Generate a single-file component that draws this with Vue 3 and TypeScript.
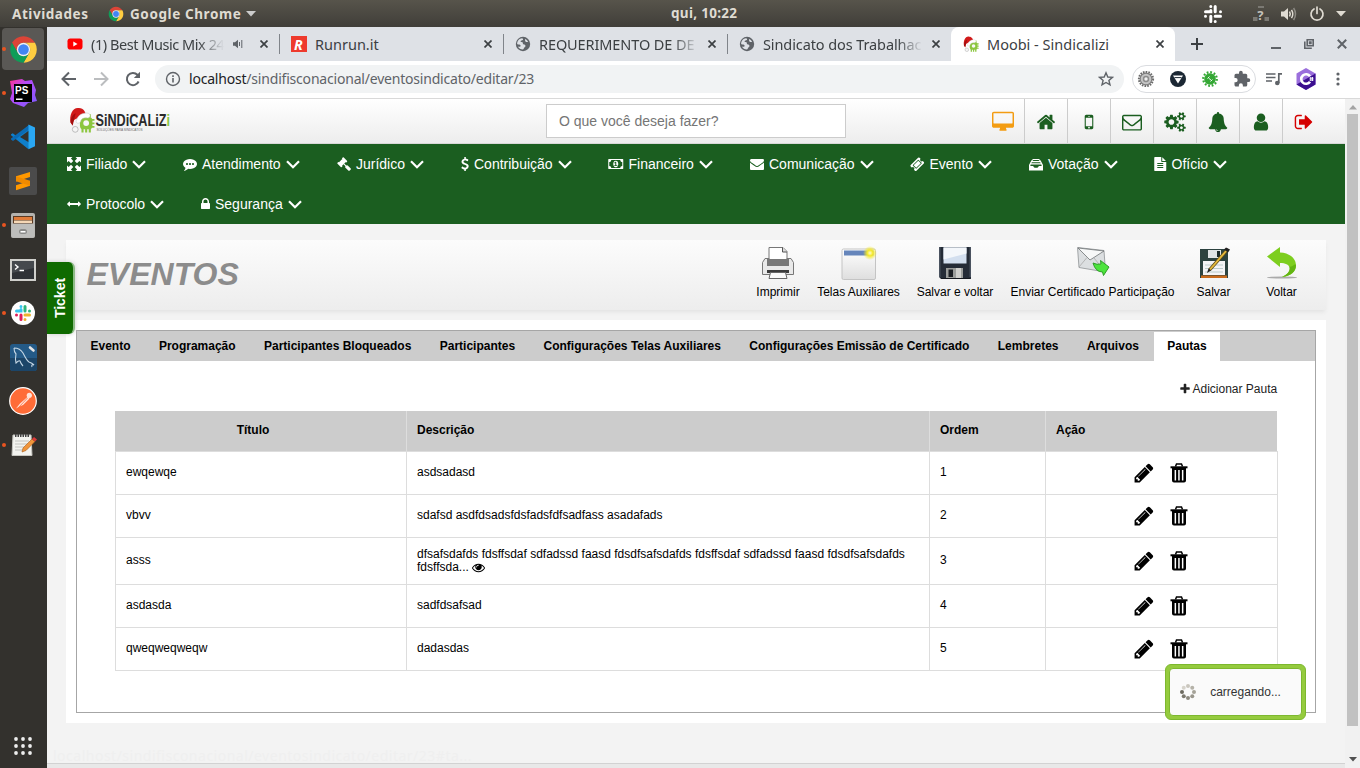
<script setup lang="ts">
interface NavItem { label: string; icon: string; box: string; iw: number; ih: number; width: number }
interface Row { titulo: string; descricao: string; ordem: number; more?: boolean }

const nav: NavItem[] = [
  { label: 'Filiado', icon: 'M0 0h5.500L3.900 1.600 6.300 4 4 6.300 1.600 3.900 0 5.500zM14 0v5.500l-1.600-1.600L10 6.300 7.700 4l2.400-2.400L8.500 0zM0 14V8.500l1.600 1.600L4 7.700 6.300 10l-2.400 2.400L5.500 14zM14 14H8.500l1.600-1.600L7.700 10 10 7.700l2.400 2.400L14 8.500z', box: '0 0 14 14', iw: 14, ih: 14, width: 116 },
  { label: 'Atendimento', icon: 'M640 896q0-53-37.500-90.500t-90.500-37.500-90.500 37.500-37.500 90.500 37.500 90.500 90.500 37.500 90.500-37.500 37.500-90.500zm384 0q0-53-37.500-90.500t-90.500-37.500-90.500 37.500-37.500 90.500 37.500 90.500 90.500 37.500 90.500-37.500 37.500-90.500zm384 0q0-53-37.500-90.500t-90.500-37.500-90.500 37.500-37.500 90.500 37.500 90.500 90.500 37.500 90.500-37.500 37.500-90.500zm384 0q0 174-120 321.500t-326 233-450 85.500q-110 0-211-18-173 173-435 229-52 10-86 13-12 1-22-6t-13-18q-4-15 20-37 5-5 23.500-21.500t25.500-23.500 23.500-25.500 24-31.500 20.500-37 20-48 14.500-57.500 12.500-72.500q-146-90-229.500-216.500t-83.500-269.500q0-174 120-321.500t326-233 450-85.500 450 85.500 326 233 120 321.500z', box: '0 0 1792 1792', iw: 14, ih: 14, width: 154 },
  { label: 'Jurídico', icon: 'M1771 1536q0 53-37 90l-107 108q-39 37-91 37-53 0-90-37l-363-364q-38-36-38-90 0-53 43-96l-256-256-126 126q-14 14-34 14t-34-14q2 2 12.500 12t12.500 13 10 11.500 10 13.500 6 13.500 5.500 16.500 1.500 18q0 38-28 68-3 3-16.500 18t-19 20.500-18.500 16.500-22 15.500-22 9-26 4.500q-40 0-68-28l-408-408q-28-28-28-68 0-13 4.500-26t9-22 15.500-22 16.500-18.500 20.500-19 18-16.500q30-28 68-28 10 0 18 1.500t16.500 5.500 13.500 6 13.500 10 11.500 10 13 12.500 12 12.500q-14-14-14-34t14-34l348-348q14-14 34-14t34 14q-2-2-12.500-12t-12.500-13-10-11.500-10-13.500-6-13.500-5.500-16.500-1.500-18q0-38 28-68 3-3 16.500-18t19-20.500 18.500-16.500 22-15.500 22-9 26-4.500q40 0 68 28l408 408q28 28 28 68 0 13-4.500 26t-9 22-15.500 22-16.500 18.500-20.500 19-18 16.500q-30 28-68 28-10 0-18-1.500t-16.500-5.500-13.500-6-13.500-10-11.500-10-13-12.500-12-12.500q14 14 14 34t-14 34l-126 126 256 256q43-43 96-43 52 0 91 37l363 363q37 39 37 91z', box: '0 0 1792 1792', iw: 14, ih: 14, width: 124 },
  { label: 'Contribuição', icon: 'M1362 1185q0 153-99.500 263.500t-258.500 136.500v175q0 14-9 23t-23 9h-135q-13 0-22.500-9.500t-9.500-22.500v-175q-66-9-127.500-31t-101.500-44.500-74-48-46.500-37.500-17.500-18q-17-21-2-41l103-135q7-10 23-12 15-2 24 9l2 2q113 99 243 125 37 8 74 8 81 0 142.500-43t61.500-122q0-28-15-53t-33.500-42-58.500-37.500-66-32-80-32.500q-39-16-61.500-25t-61.500-26.500-62.500-31-56.500-35.500-53.500-42.500-43.500-49-35.500-58-21-66.500-8.500-78q0-138 98-242t255-134v-180q0-13 9.500-22.500t22.500-9.500h135q14 0 23 9t9 23v176q57 6 110.500 23t87 33.500 63.500 37.500 39 29 15 14q17 18 5 38l-81 146q-8 15-23 16-14 3-27-7-3-3-14.500-12t-39-26.500-58.500-32-74.500-26-85.500-11.500q-95 0-155 43t-60 111q0 26 8.500 48t29.500 41.500 39.500 33 56 31 60.500 27 70 27.500q53 20 81 31.500t76 35 75.500 42.500 62 50 53 63.500 31.500 76.500 13 94z', box: '384 0 1024 1792', iw: 8, ih: 14, width: 147 },
  { label: 'Financeiro', icon: 'M768 1152h384v-96h-128v-448h-114l-148 137 77 80q42-37 55-57h2v288h-128v96zm512-256q0 70-21 142t-59.500 134-101.500 101-138 39-138-39-101.500-101-59.500-134-21-142 21-142 59.500-134 101.500-101 138-39 138 39 101.500 101 59.500 134 21 142zm512 256v-512q-106 0-181-75t-75-181h-1152q0 106-75 181t-181 75v512q106 0 181 75t75 181h1152q0-106 75-181t181-75zm128-832v1152q0 26-19 45t-45 19h-1792q-26 0-45-19t-19-45v-1152q0-26 19-45t45-19h1792q26 0 45 19t19 45z', box: '0 0 1920 1792', iw: 15.5, ih: 14, width: 142 },
  { label: 'Comunicação', icon: 'M1792 710v794q0 66-47 113t-113 47h-1472q-66 0-113-47t-47-113v-794q44 49 101 87 362 246 497 345 57 42 92.500 65.500t94.500 48 110 24.500h2q51 0 110-24.500t94.500-48 92.500-65.500q170-123 498-345 57-39 100-87zm0-294q0 79-49 151t-122 123q-376 261-468 325-10 7-42.500 30.500t-54 38-52 32.500-57.500 27-50 9h-2q-23 0-50-9t-57.500-27-52-32.500-54-38-42.500-30.500q-91-64-262-182.500t-205-142.500q-62-42-117-115.500t-55-136.500q0-78 41.500-130t118.500-52h1472q65 0 112.500 47t47.500 113z', box: '0 0 1792 1792', iw: 14, ih: 14, width: 160 },
  { label: 'Evento', icon: 'M1024 452l316 316-572 572-316-316zm-211 979l618-618q19-19 19-45t-19-45l-362-362q-18-18-45-18t-45 18l-618 618q-19 19-19 45t19 45l362 362q18 18 45 18t45-18zm889-637l-907 908q-37 37-90.500 37t-90.500-37l-126-126q56-56 56-136t-56-136-136-56-136 56l-125-126q-37-37-37-90.500t37-90.500l907-906q37-37 90.500-37t90.500 37l125 125q-56 56-56 136t56 136 136 56 136-56l126 125q37 37 37 90.500t-37 90.500z', box: '0 0 1792 1792', iw: 14.5, ih: 14.5, width: 119 },
  { label: 'Votação', icon: 'M4 1h6l1.800 1.800L14 7v5.500H0V7l2.200-4.200zM4.400 2 3.300 3.100h7.400L9.600 2zM2.900 4.200 2.300 5.300h9.400l-.6-1.100zM1.700 6.500 1.300 7.900h2.900c.3 1.300 1.300 1.900 2.800 1.900s2.500-.6 2.800-1.900h2.900l-.4-1.400z', box: '0 0 14 13', iw: 14, ih: 13, width: 125 },
  { label: 'Ofício', icon: 'M1596 476q14 14 28 36h-472v-472q22 14 36 28zm-476 164h544v1056q0 40-28 68t-68 28h-1344q-40 0-68-28t-28-68v-1600q0-40 28-68t68-28h800v544q0 40 28 68t68 28zm160 736v-64q0-14-9-23t-23-9h-704q-14 0-23 9t-9 23v64q0 14 9 23t23 9h704q14 0 23-9t9-23zm0-256v-64q0-14-9-23t-23-9h-704q-14 0-23 9t-9 23v64q0 14 9 23t23 9h704q14 0 23-9t9-23zm0-256v-64q0-14-9-23t-23-9h-704q-14 0-23 9t-9 23v64q0 14 9 23t23 9h704q14 0 23-9t9-23z', box: '128 0 1536 1792', iw: 12.5, ih: 14, width: 110 },
  { label: 'Protocolo', icon: 'M1792 896q0 26-19 45l-256 256q-19 19-45 19t-45-19-19-45v-128h-1024v128q0 26-19 45t-45 19-45-19l-256-256q-19-19-19-45t19-45l256-256q19-19 45-19t45 19 19 45v128h1024v-128q0-26 19-45t45-19 45 19l256 256q19 19 19 45z', box: '0 0 1792 1792', iw: 14, ih: 14, width: 134 },
  { label: 'Segurança', icon: 'M640 768h512v-192q0-106-75-181t-181-75-181 75-75 181v192zm832 96v576q0 40-28 68t-68 28h-960q-40 0-68-28t-28-68v-576q0-40 28-68t68-28h32v-192q0-184 132-316t316-132 316 132 132 316v192h32q40 0 68 28t28 68z', box: '320 0 1152 1792', iw: 9, ih: 14, width: 140 },
]

const shortcuts = [
  { name: 'desktop', color: '#f39c12', box: '0 0 1920 1792', w: 22, h: 22, d: 'M1792 992v-832q0-13-9.500-22.500t-22.500-9.500h-1600q-13 0-22.500 9.500t-9.500 22.500v832q0 13 9.500 22.500t22.500 9.500h1600q13 0 22.500-9.500t9.500-22.500zm128-832v1088q0 66-47 113t-113 47h-544q0 37 16 77.500t32 71 16 43.500q0 26-19 45t-45 19h-512q-26 0-45-19t-19-45q0-14 16-44t32-70 16-78h-544q-66 0-113-47t-47-113v-1088q0-66 47-113t113-47h1600q66 0 113 47t47 113z' },
  { name: 'home', color: '#1b5e20', box: '0 0 1792 1792', w: 20, h: 20, d: 'M1472 992v480q0 26-19 45t-45 19h-384v-384h-256v384h-384q-26 0-45-19t-19-45v-480q0-1 .5-3t.5-3l575-474 575 474q1 2 1 6zm223-69l-62 74q-8 9-21 11h-3q-13 0-21-7l-692-577-692 577q-12 8-24 7-13-2-21-11l-62-74q-8-10-7-23.500t11-21.500l719-599q32-26 76-26t76 26l244 204v-195q0-14 9-23t23-9h192q14 0 23 9t9 23v408l219 182q10 8 11 21.500t-7 23.500z' },
  { name: 'mobile', color: '#1b5e20', box: '0 0 1792 1792', w: 20, h: 20, d: 'M976 1408q0-33-23.500-56.500t-56.500-23.500-56.500 23.500-23.500 56.500 23.500 56.500 56.500 23.500 56.500-23.500 23.500-56.500zm208-160v-704q0-13-9.500-22.500t-22.500-9.500h-512q-13 0-22.500 9.500t-9.500 22.500v704q0 13 9.500 22.500t22.500 9.500h512q13 0 22.500-9.500t9.500-22.500zm-192-848q0-16-16-16h-160q-16 0-16 16t16 16h160q16 0 16-16zm288-16v1024q0 52-38 90t-90 38h-512q-52 0-90-38t-38-90v-1024q0-52 38-90t90-38h512q52 0 90 38t38 90z' },
  { name: 'mail', color: '#1b5e20', box: '0 0 1792 1792', w: 20, h: 20, d: 'M1664 1504v-768q-32 36-69 66-268 206-426 338-51 43-83 67t-86.500 48.500-102.500 24.500h-2q-48 0-102.500-24.500t-86.500-48.500-83-67q-158-132-426-338-37-30-69-66v768q0 13 9.500 22.500t22.500 9.500h1472q13 0 22.500-9.500t9.500-22.500zm0-1051v-24.500l-.5-13-3-12.500-5.500-9-9-7.500-14-2.500h-1472q-13 0-22.500 9.500t-9.500 22.500q0 168 147 284 193 152 401 317 6 5 35 29.500t46 37.500 44.500 31.500 50.500 27.500 43 9h2q20 0 43-9t50.500-27.500 44.500-31.500 46-37.500 35-29.500q208-165 401-317 54-43 100.500-115.500t46.500-131.500zm128-37v1088q0 66-47 113t-113 47h-1472q-66 0-113-47t-47-113v-1088q0-66 47-113t113-47h1472q66 0 113 47t47 113z' },
  { name: 'cogs', color: '#1b5e20', box: '0 0 1920 1792', w: 22, h: 20, d: 'M896 896q0-106-75-181t-181-75-181 75-75 181 75 181 181 75 181-75 75-181zm768 512q0-52-38-90t-90-38-90 38-38 90q0 53 37.500 90.500t90.500 37.500 90.500-37.500 37.500-90.500zm0-1024q0-52-38-90t-90-38-90 38-38 90q0 53 37.500 90.500t90.500 37.500 90.500-37.500 37.500-90.500zm-384 421v185q0 10-7 19.500t-16 10.500l-155 24q-11 35-32 76 34 48 90 115 7 11 7 20 0 12-7 19-23 30-82.500 89.500t-78.500 59.500q-11 0-21-7l-115-90q-37 19-77 31-11 108-23 155-7 24-30 24h-186q-11 0-20-7.500t-10-17.500l-23-153q-34-10-75-31l-118 89q-7 7-20 7-11 0-21-8-144-133-144-160 0-9 7-19 10-14 41-53t47-61q-23-44-35-82l-152-24q-10-1-17-9.500t-7-19.500v-185q0-10 7-19.500t16-10.500l155-24q11-35 32-76-34-48-90-115-7-11-7-20 0-12 7-20 22-30 82-89t79-59q11 0 21 7l115 90q34-18 77-32 11-108 23-154 7-24 30-24h186q11 0 20 7.500t10 17.500l23 153q34 10 75 31l118-89q8-7 20-7 11 0 21 8 144 133 144 160 0 8-7 19-12 16-42 54t-45 60q23 48 34 82l152 23q10 2 17 10.500t7 19.500zm640 533v140q0 16-149 31-12 27-30 52 51 113 51 138 0 4-4 7-122 71-124 71-8 0-46-47t-52-68q-20 2-30 2t-30-2q-14 21-52 68t-46 47q-2 0-124-71-4-3-4-7 0-25 51-138-18-25-30-52-149-15-149-31v-140q0-16 149-31 13-29 30-52-51-113-51-138 0-4 4-7 4-2 35-20t59-34 30-16q8 0 46 46.500t52 67.500q20-2 30-2t30 2q51-71 92-112l6-2q4 0 124 70 4 3 4 7 0 25-51 138 17 23 30 52 149 15 149 31zm0-1024v140q0 16-149 31-12 27-30 52 51 113 51 138 0 4-4 7-122 71-124 71-8 0-46-47t-52-68q-20 2-30 2t-30-2q-14 21-52 68t-46 47q-2 0-124-71-4-3-4-7 0-25 51-138-18-25-30-52-149-15-149-31v-140q0-16 149-31 13-29 30-52-51-113-51-138 0-4 4-7 4-2 35-20t59-34 30-16q8 0 46 46.500t52 67.500q20-2 30-2t30 2q51-71 92-112l6-2q4 0 124 70 4 3 4 7 0 25-51 138 17 23 30 52 149 15 149 31z' },
  { name: 'bell', color: '#1b5e20', box: '0 0 1792 1792', w: 20, h: 20, d: 'M912 1696q0-16-16-16-59 0-101.500-42.500t-42.500-101.500q0-16-16-16t-16 16q0 73 51.500 124.500t124.500 51.500q16 0 16-16zm816-288q0 52-38 90t-90 38h-448q0 106-75 181t-181 75-181-75-75-181h-448q-52 0-90-38t-38-90q50-42 91-88t85-119.500 74.500-158.500 50-206 19.500-260q0-152 117-282.500t307-158.500q-8-19-8-39 0-40 28-68t68-28 68 28 28 68q0 20-8 39 190 28 307 158.500t117 282.500q0 139 19.500 260t50 206 74.500 158.500 85 119.500 91 88z' },
  { name: 'user', color: '#1b5e20', box: '0 0 1792 1792', w: 20, h: 20, d: 'M1536 1399q0 109-62.500 187t-150.500 78h-854q-88 0-150.500-78t-62.500-187q0-85 8.500-160.500t31.500-152 58.500-131 94-89 134.500-34.500q131 128 313 128t313-128q76 0 134.500 34.500t94 89 58.500 131 31.500 152 8.500 160.500zm-256-887q0 159-112.500 271.500t-271.500 112.500-271.500-112.500-112.500-271.500 112.500-271.500 271.500-112.500 271.500 112.500 112.500 271.500z' },
  { name: 'logout', color: '#d50000', box: '0 0 1792 1792', w: 20, h: 20, d: 'M704 1440q0 4 1 20t.5 26.500-3 23.500-10 19.500-20.500 6.500h-320q-119 0-203.500-84.500t-84.500-203.500v-704q0-119 84.500-203.500t203.500-84.500h320q13 0 22.500 9.500t9.500 22.500q0 4 1 20t.5 26.500-3 23.500-10 19.500-20.500 6.500h-320q-66 0-113 47t-47 113v704q0 66 47 113t113 47h312l11.500 1 11.500 3 8 5.500 7 9 2 13.500zm928-544q0 26-19 45l-544 544q-19 19-45 19t-45-19-19-45v-288h-448q-26 0-45-19t-19-45v-384q0-26 19-45t45-19h448v-288q0-26 19-45t45-19 45 19l544 544q19 19 19 45z' },
]

const eyePath = 'M1664 960q-152-236-381-353 61 104 61 225 0 185-131.500 316.500t-316.500 131.500-316.500-131.500-131.500-316.500q0-121 61-225-229 117-381 353 133 205 333.500 326.500t434.500 121.500 434.500-121.500 333.500-326.500zm-720-384q0-20-14-34t-34-14q-125 0-214.500 89.500t-89.500 214.500q0 20 14 34t34 14 34-14 14-34q0-86 61-147t147-61q20 0 34-14t14-34zm848 384q0 34-20 69-140 230-376.500 368.500t-499.500 138.500-499.500-139-376.500-368q-20-35-20-69t20-69q140-229 376.500-368t499.500-139 499.500 139 376.500 368q20 35 20 69z'
const pencilPath = 'M491 1536l91-91-235-235-91 91v107h128v128h107zm523-928q0-22-22-22-10 0-17 7l-542 542q-7 7-7 17 0 22 22 22 10 0 17-7l542-542q7-7 7-17zm-54-192l416 416-832 832h-416v-416zm683 96q0 53-37 90l-166 166-416-416 166-165q36-38 90-38 53 0 91 38l235 234q37 39 37 91z'
const plusPath = 'M1600 736v192q0 40-28 68t-68 28h-416v416q0 40-28 68t-68 28h-192q-40 0-68-28t-28-68v-416h-416q-40 0-68-28t-28-68v-192q0-40 28-68t68-28h416v-416q0-40 28-68t68-28h192q40 0 68 28t28 68v416h416q40 0 68 28t28 68z'

const browserTabs = [
  { title: '(1) Best Music Mix 24', icon: 'yt', audio: true, clip: true, active: false, cls: 't1' },
  { title: 'Runrun.it', icon: 'rr', audio: false, clip: false, active: false, cls: 't2' },
  { title: 'REQUERIMENTO DE DE', icon: 'globe', audio: false, clip: true, active: false, cls: 't3' },
  { title: 'Sindicato dos Trabalhac', icon: 'globe', audio: false, clip: true, active: false, cls: 't4' },
  { title: 'Moobi - Sindicalizi', icon: 'gnome', audio: false, clip: false, active: true, cls: 't5' },
]

const dock = [
  { id: 'chrome', running: true }, { id: 'ps', running: true }, { id: 'code', running: false },
  { id: 'subl', running: false }, { id: 'files', running: true }, { id: 'term', running: false },
  { id: 'slack', running: true }, { id: 'mysql', running: false }, { id: 'post', running: false },
  { id: 'edit', running: true },
]

const actions = [
  { label: 'Imprimir', id: 'print', width: 60 },
  { label: 'Telas Auxiliares', id: 'window', width: 101 },
  { label: 'Salvar e voltar', id: 'floppy', width: 92 },
  { label: 'Enviar Certificado Participação', id: 'send', width: 183 },
  { label: 'Salvar', id: 'save', width: 59 },
  { label: 'Voltar', id: 'back', width: 77 },
]

const tabs = ['Evento', 'Programação', 'Participantes Bloqueados', 'Participantes', 'Configurações Telas Auxiliares', 'Configurações Emissão de Certificado', 'Lembretes', 'Arquivos', 'Pautas']

const rows: Row[] = [
  { titulo: 'ewqewqe', descricao: 'asdsadasd', ordem: 1 },
  { titulo: 'vbvv', descricao: 'sdafsd asdfdsadsfdsfadsfdfsadfass asadafads', ordem: 2 },
  { titulo: 'asss', descricao: 'dfsafsdafds fdsffsdaf sdfadssd faasd fdsdfsafsdafds fdsffsdaf sdfadssd faasd fdsdfsafsdafds fdsffsda...', ordem: 3, more: true },
  { titulo: 'asdasda', descricao: 'sadfdsafsad', ordem: 4 },
  { titulo: 'qweqweqweqw', descricao: 'dadasdas', ordem: 5 },
]

const spinner = ['#c9c6bd', '#b5b2a8', '#a5a298', '#99968c', '#8d8a80', '#7c796f', '#6c695f', '#d6d3cb'].map((fill, i) => {
  const a = ((i - 2) * Math.PI) / 4
  return { fill, cx: 8 + 6 * Math.cos(a), cy: 8 + 6 * Math.sin(a) }
})
</script>

<template>
  <div class="desktop">
    <svg class="sprite" width="0" height="0" aria-hidden="true">
      <symbol id="i-chrome" viewBox="0 0 48 48">
        <path fill="#db4437" d="M4.950 13A22 22 0 0 1 43.050 13H24A11 11 0 0 0 14.470 29.500z" />
        <path fill="#ffcd40" d="M43.050 13A22 22 0 0 1 24 46L33.530 29.500A11 11 0 0 0 24 13z" />
        <path fill="#0f9d58" d="M24 46A22 22 0 0 1 4.950 13L14.470 29.500A11 11 0 0 0 33.530 29.500z" />
        <circle cx="24" cy="24" r="11" fill="#f1f1f1" /><circle cx="24" cy="24" r="8.800" fill="#4285f4" />
      </symbol>
      <symbol id="i-globe" viewBox="0 0 16 16">
        <circle cx="8" cy="8" r="7.200" fill="#5f6368" />
        <path fill="#dee1e6" d="M7 2.200c1 .3 1.400 1 .8 1.700-.7.700-1.900.3-2.200 1.300-.2.800.9.800 1.600 1 1 .2 1 1.300.4 1.900.9.400 2.400.3 2.800 1.300.3.900-.3 1.500-1 2-.6.500-.6 1.400-1.300 2-1.900.2-4.300-1.100-5.200-3 .9.400 2.200.6 2.600-.2.300-.8-.4-1.400-1.200-1.600-.9-.2-1.800-.2-2.200-.9C2.200 4.900 4.300 2.300 7 2.200zM10.200 3c1.300.5 2.400 1.600 2.900 2.900-.9.300-2 .3-2.600-.4-.6-.8-.5-1.700-.3-2.500z" />
      </symbol>
      <symbol id="i-gnome" viewBox="0 0 24 25">
        <g fill="#8cc63f"><rect x="10" y="9.500" width="12" height="12" rx="3.500" /><path d="M11.500 20h2v4.500h-2zM15 20h2v4.500h-2zM18.500 20h2v4.500h-2zM21 11.500h3v1.700h-3zM21 15h3v1.700h-3zM21 18.300h3V20h-3zM15 7h2v3h-2zM18.500 7h2v3h-2z" /></g>
        <circle cx="16" cy="15.500" r="2.800" fill="#f7f7f7" />
        <path fill="#d11a1a" d="M1 15C-.5 8 3 0 9 1c5 0 6 4 7 7L7 11c-3 1-4 3-4 6z" />
        <path fill="#a50e0e" d="M1 15c0-4 2-8 5-9-1 3-2 8-3 12z" />
        <path fill="#fff" stroke="#c4c4c4" stroke-width=".5" d="M7 12c1-4 6-7 11-6 3 1 2 5-1 4.500-4-.5-6 1-6.500 4C8 17 5 15 7 12z" />
        <circle cx="5.500" cy="21.500" r="2.800" fill="#f4f4f4" stroke="#aaa" stroke-width=".7" />
      </symbol>
    </svg>

    <header class="topbar">
      <span class="act">Atividades</span>
      <svg class="tb-chrome" width="16" height="16"><use href="#i-chrome" /></svg>
      <span class="appname">Google Chrome</span>
      <svg class="tri" width="10" height="6" viewBox="0 0 10 6"><path fill="#ccc" d="M0 0h10L5 5.500z" /></svg>
      <span class="clock">qui, 10:22</span>
      <div class="tray">
        <svg width="20" height="20" viewBox="0 0 20 20"><g fill="none" stroke="#fff" stroke-width="3" stroke-linecap="round"><path d="M7.800 2.500v0M7.800 6.500v1.300H2.500M12.200 2.500v5.300M17.500 7.800h0M12.200 12.200h5.300M12.200 17.500v0M7.800 12.200v5.300M2.500 12.200h0" /></g></svg>
        <svg class="net" width="16" height="16" viewBox="0 0 16 16"><path fill="#7b7973" d="M5 0h6v2H5zM0 11h4.500v4H0zM11.500 11H16v4h-4.500z" /><text x="4.300" y="13.500" font-size="13" font-weight="700" fill="#c4c2bb">?</text></svg>
        <svg class="vol" width="16" height="14" viewBox="0 0 16 14"><path fill="#dfdbd2" d="M0 4.500h3L7 1v12L3 9.500H0z" /><path fill="none" stroke="#dfdbd2" stroke-width="1.500" d="M8.500 4.500q1.500 2.500 0 5M10.500 2.800q2.600 4.200 0 8.400" /><path fill="none" stroke="#8b8982" stroke-width="1.500" d="M12.600 1q3.800 6 0 12" /></svg>
        <svg class="pow" width="16" height="16" viewBox="0 0 16 16"><path fill="none" stroke="#dfdbd2" stroke-width="1.700" stroke-linecap="round" d="M5 2.900a6 6 0 1 0 6 0M8 1v6.500" /></svg>
        <svg class="tri2" width="10" height="6" viewBox="0 0 10 6"><path fill="#dfdbd2" d="M0 0h10L5 5.500z" /></svg>
      </div>
    </header>

    <div class="main">
      <aside class="dock">
        <div v-for="d in dock" :key="d.id" class="launcher" :class="{ focused: d.id === 'chrome' }">
          <i v-if="d.running" class="pip"></i>
          <svg v-if="d.id === 'chrome'" width="29" height="29"><use href="#i-chrome" /></svg>
          <svg v-else-if="d.id === 'ps'" width="30" height="30" viewBox="0 0 30 30">
            <defs><linearGradient id="psg" x1="0" y1="0" x2="1" y2="1"><stop offset="0" stop-color="#ff318c" /><stop offset=".35" stop-color="#b74af7" /><stop offset="1" stop-color="#7b5cff" /></linearGradient></defs>
            <path fill="url(#psg)" d="M2 3l12-2 3 2 7-1 4 10-1 5 2 6-9 2-4 4-11-4-3-4 2-6z" /><path fill="#000" d="M6 6h18v18H6z" /><path fill="#fff" d="M8 20.500h6.500V22H8z" />
            <text x="7" y="15.500" font-size="10" font-weight="700" fill="#fff">PS</text>
          </svg>
          <svg v-else-if="d.id === 'code'" width="26" height="26" viewBox="0 0 26 26">
            <path fill="#0f7fcb" d="M19 1 6.500 12.300 2.800 9.300 1 10.300v1l17.500 14L20 19 10 13l9-6.500z" /><path fill="#0a6bb5" d="M1 15.500l2 1.500L19 5.500V1L1 14.500z" /><path fill="#2aa7f3" d="M18.500.6 25 3.500v18.800l-6.500 3z" />
          </svg>
          <svg v-else-if="d.id === 'subl'" width="28" height="28" viewBox="0 0 28 28">
            <rect width="28" height="28" rx="2" fill="#4b4b4b" /><path fill="#ff9800" d="M21 5v5L7 14.500V9.300zM21 13.800v5L7 23.300v-5z" /><path fill="#f08a00" d="M7 9.300l14 4.500v5L7 14.300z" />
          </svg>
          <svg v-else-if="d.id === 'files'" width="26" height="27" viewBox="0 0 26 27">
            <rect x="1" y="1" width="24" height="25" rx="2" fill="#b4b2ae" /><rect x="3" y="4" width="20" height="8" fill="#5b3a22" /><path fill="#e07b39" d="M4 5h18v3H4z" /><path fill="#f5d7b5" d="M4 8.500h18V11H4z" /><rect x="1.500" y="11.500" width="23" height="14" rx="1.500" fill="#bdbdbb" /><rect x="9" y="17" width="8" height="5" rx="2.500" fill="#8a8a88" /><path fill="#fff" d="M10.500 19h5v1.500h-5z" />
          </svg>
          <svg v-else-if="d.id === 'term'" class="low" width="26" height="22" viewBox="0 0 26 22">
            <rect x="1" y="1" width="24" height="20" fill="#2f3236" stroke="#cfcfcb" stroke-width="2" /><path fill="#45494d" d="M2 2h22v7L2 14z" /><path fill="none" stroke="#fff" stroke-width="1.400" d="M5 5.500l3 2.500-3 2.500M9.500 11.500h4.500" />
          </svg>
          <svg v-else-if="d.id === 'slack'" width="24" height="24" viewBox="0 0 24 24">
            <circle cx="12" cy="12" r="12" fill="#fff" />
            <g fill="none" stroke-width="3" stroke-linecap="round"><path stroke="#36c5f0" d="M10 5.500v0M10 8.500v1.500H5.500" /><path stroke="#2eb67d" d="M14 5.500V10M18.500 10h0" /><path stroke="#ecb22e" d="M14 14h4.500M14 18.500v0" /><path stroke="#e01e5a" d="M10 14v4.500M5.500 14h0" /></g>
          </svg>
          <svg v-else-if="d.id === 'mysql'" width="27" height="27" viewBox="0 0 27 27">
            <rect width="27" height="27" rx="3" fill="#245a87" /><path fill="#1c4568" d="M0 14h27v10q0 3-3 3H3q-3 0-3-3z" /><path fill="none" stroke="#c4d6e4" stroke-width="1.100" d="M4 4q6 0 9 5 4 8 6 9 3 1 5 3-3-1-2 2M4 4q0 4 2 6-1 5 0 9 3-3 4-2 1 3 3 5" /><path stroke="#e4e4e4" stroke-width="2.600" stroke-linecap="round" d="M20 3.500l3.500 3" />
          </svg>
          <svg v-else-if="d.id === 'post'" width="28" height="28" viewBox="0 0 28 28">
            <circle cx="14" cy="14" r="13.300" fill="#ff6c37" stroke="#fff" stroke-width="1.200" /><path fill="#ffe3d8" d="M7 21.500l4-5 8-7 1.500 2-6.500 6.500-3.500 1.500z" /><circle cx="20.300" cy="8.300" r="2.600" fill="#ffe3d8" /><path stroke="#ff6c37" stroke-width=".8" d="M9.500 20.500l9-9.500" />
          </svg>
          <svg v-else width="27" height="24" viewBox="0 0 27 24">
            <path fill="#f3f3ef" stroke="#c6c6c0" d="M3 2h18l1 20.500H2z" /><path stroke="#444" stroke-width="3" stroke-dasharray="1.500 1" d="M5 2.500h15" /><path stroke="#c3c3bf" d="M5 8h14M5 11h13M5 14h10M5 17h8" /><path fill="#f0953b" stroke="#a65c1b" stroke-width=".6" d="M13 15l9-9 3 2.500-9 9-4 1.500z" /><path fill="#dc3b3b" d="M22 6l2-2 3 2.500L25 8.500z" />
          </svg>
        </div>
        <svg class="apps" width="18" height="18" viewBox="0 0 18 18"><g fill="#eee"><template v-for="y in 3" :key="y"><circle v-for="x in 3" :key="x" :cx="x * 7 - 5" :cy="y * 7 - 5" r="1.900" /></template></g></svg>
      </aside>

      <section class="browser">
        <div class="tabstrip">
          <div v-for="(t, i) in browserTabs" :key="t.title" class="btab" :class="{ active: t.active, nosep: i === 3 }">
            <svg v-if="t.icon === 'yt'" class="fav" width="16" height="16" viewBox="0 0 16 16"><rect x=".5" y="2.500" width="15" height="11" rx="2.800" fill="#f00" /><path fill="#fff" d="M6.300 5.500v5l4.200-2.500z" /></svg>
            <svg v-else-if="t.icon === 'rr'" class="fav" width="16" height="16" viewBox="0 0 16 16"><rect width="16" height="16" fill="#ee3a2d" /><text x="3" y="13.500" font-size="14" font-style="italic" font-weight="700" fill="#fff">R</text></svg>
            <svg v-else class="fav" width="16" height="16"><use :href="'#i-' + t.icon" /></svg>
            <span class="btitle" :class="[{ clip: t.clip }, t.cls]">{{ t.title }}</span>
            <svg v-if="t.audio" class="aud" width="10" height="10" viewBox="0 0 10 10"><path fill="#5f6368" d="M0 3.300h2L5 .8v8.400L2 6.700H0z" /><path fill="none" stroke="#5f6368" d="M6.500 3v4M8.800 1v8" /></svg>
            <svg class="close" width="8" height="8" viewBox="0 0 8 8"><path stroke="#3c4043" stroke-width="1.700" d="M.5.500l7 7M7.500.500l-7 7" /></svg>
          </div>
          <svg class="plus" width="12" height="12" viewBox="0 0 12 12"><path stroke="#3c4043" stroke-width="2" d="M6 0v12M0 6h12" /></svg>
          <div class="wincontrols">
            <svg width="10" height="10" viewBox="0 0 10 10"><path fill="#5f6368" d="M0 8h10v2H0z" /></svg>
            <svg width="10" height="10" viewBox="0 0 10 10"><path fill="none" stroke="#5f6368" stroke-width="1.600" d="M3.200.8h6v6h-6zM.8 2.500v6.700h7M5.600 3.100h1.300v1.300H5.600z" /></svg>
            <svg width="10" height="10" viewBox="0 0 10 10"><path stroke="#5f6368" stroke-width="2" d="M.8.800l8.400 8.400M9.200.8.800 9.200" /></svg>
          </div>
        </div>

        <div class="toolbar">
          <svg class="tbi" width="16" height="16" viewBox="0 0 16 16"><path fill="none" stroke="#5f6368" stroke-width="2" d="M15 8H2M8 1.500 1.500 8 8 14.500" /></svg>
          <svg class="tbi" width="16" height="16" viewBox="0 0 16 16"><path fill="none" stroke="#bbbdbf" stroke-width="2" d="M1 8h13M8 1.500 14.500 8 8 14.500" /></svg>
          <svg class="tbi" width="16" height="16" viewBox="0 0 16 16"><path fill="none" stroke="#5f6368" stroke-width="2" d="M13.600 10.500A6.100 6.100 0 1 1 12.400 3.800L14 5.500" /><path fill="#5f6368" d="M15 .8v6.200H8.800z" /></svg>
          <div class="omnibox">
            <svg width="16" height="16" viewBox="0 0 16 16"><circle cx="8" cy="8" r="6.500" fill="none" stroke="#5f6368" stroke-width="1.400" /><path fill="#5f6368" d="M7.200 7h1.600v4.500H7.200zM7.200 4.300h1.600v1.600H7.200z" /></svg>
            <span class="url"><b>localhost</b>/sindifisconacional/eventosindicato/editar/23</span>
            <svg class="star" width="16" height="16" viewBox="0 0 16 16"><path fill="none" stroke="#5f6368" stroke-width="1.400" d="M8 1.800l1.800 4.200 4.600.4-3.500 3 1.100 4.500L8 11.500l-4 2.400 1.100-4.500-3.500-3L6.200 6z" /></svg>
          </div>
          <div class="exts">
            <svg width="18" height="18" viewBox="0 0 18 18"><circle cx="9" cy="9" r="7" fill="none" stroke="#6a6a6a" stroke-width="2.200" stroke-dasharray="1.600 1.100" /><circle cx="9" cy="9" r="6.400" fill="#7d7d7d" /><circle cx="9" cy="9" r="5.300" fill="#c4c4c4" /><circle cx="9" cy="9" r="3.200" fill="#8c8c8c" /><circle cx="9" cy="9" r="1.700" fill="#f0f0f0" /></svg>
            <svg width="18" height="18" viewBox="0 0 18 18"><circle cx="9" cy="9" r="8" fill="#1b2733" /><path fill="#fff" d="M4 5.500h10L9 13.500z" /><path stroke="#1b2733" d="M5.500 7.600h7" /></svg>
            <svg width="18" height="18" viewBox="0 0 18 18"><circle cx="9" cy="9" r="5.800" fill="#35a835" /><circle cx="9" cy="9" r="6.800" fill="none" stroke="#35a835" stroke-width="2.200" stroke-dasharray="1.800 1.760" /><path fill="none" stroke="#fff" stroke-width=".9" d="M6.500 8.500l2-2M9.500 11.500l2-2M7.500 8l3 2.500" /></svg>
            <svg width="18" height="18" viewBox="0 0 24 24"><path fill="#5f6368" d="M20.500 11H19V7a2 2 0 0 0-2-2h-4V3.500a2.500 2.500 0 0 0-5 0V5H4a2 2 0 0 0-2 2v3.800h1.500a2.700 2.700 0 0 1 0 5.400H2V20c0 1.100.9 2 2 2h3.800v-1.500a2.700 2.700 0 0 1 5.400 0V22H17a2 2 0 0 0 2-2v-4h1.500a2.500 2.500 0 0 0 0-5z" /></svg>
          </div>
          <svg class="music" width="16" height="14" viewBox="0 0 16 14"><path stroke="#5f6368" stroke-width="1.700" d="M0 2h9.500M0 5.500h9.500M0 9h6" /><path fill="none" stroke="#5f6368" stroke-width="1.700" d="M16 1.800h-3.200V11" /><circle cx="11.300" cy="11" r="2.300" fill="#5f6368" /></svg>
          <svg class="avatar" width="20" height="22" viewBox="0 0 20 22"><path fill="#9b6fdc" d="M10 0l9.500 5.500v11L10 22 .5 16.500v-11z" /><path fill="#3b0f8f" d="M19.500 5.500v11L10 22 .5 16.500z" /><path fill="none" stroke="#fff" stroke-width="2.600" d="M14 8.300a4.800 4.800 0 1 0 0 5.400" /><path stroke="#fff" stroke-width=".9" d="M13.500 10.200h4M13.500 12h4M14.800 9v4M16.500 9v4" /></svg>
          <svg class="kebab" width="4" height="14" viewBox="0 0 4 14"><g fill="#5f6368"><circle cx="2" cy="2" r="1.600" /><circle cx="2" cy="7" r="1.600" /><circle cx="2" cy="12" r="1.600" /></g></svg>
        </div>

        <div class="viewport">
          <div class="page">
            <div class="sitehead">
              <svg class="logo" width="106" height="28" viewBox="0 0 106 28">
                <svg x="0" y="1" width="26" height="26"><use href="#i-gnome" /></svg>
                <text x="26.500" y="20" font-size="16.500" font-weight="700" fill="#2b2b2b" textLength="74.500" lengthAdjust="spacingAndGlyphs">SiNDiCALiZ<tspan fill="#8cc63f">i</tspan></text>
                <text x="27.500" y="25" font-size="4" fill="#666" textLength="46" lengthAdjust="spacingAndGlyphs">SOLUÇÕES PARA SINDICATOS</text>
              </svg>
              <input class="search" type="text" placeholder="O que você deseja fazer?" />
              <div class="shortcuts">
                <a v-for="s in shortcuts" :key="s.name" class="cell">
                  <svg :width="s.w" :height="s.h" :viewBox="s.box"><path :fill="s.color" :d="s.d" /></svg>
                </a>
              </div>
            </div>

            <nav class="menu">
              <a v-for="n in nav" :key="n.label" class="mitem" :style="{ width: n.width + 'px' }">
                <svg class="mico" :width="n.iw" :height="n.ih" :viewBox="n.box"><path fill="#fff" fill-rule="evenodd" :d="n.icon" /></svg>
                <span>{{ n.label }}</span>
                <svg class="chev" width="14" height="9" viewBox="0 0 14 9"><path fill="none" stroke="#fff" stroke-width="2.200" d="M1 1.200l6 6 6-6" /></svg>
              </a>
            </nav>

            <div class="titlebar">
              <h1>EVENTOS</h1>
              <div class="actions">
                <a v-for="a in actions" :key="a.id" class="action" :style="{ width: a.width + 'px' }">
                  <svg v-if="a.id === 'print'" width="34" height="34" viewBox="0 0 34 34">
                    <path fill="#fff" stroke="#777" d="M8 1.500h14l4 4V14H8z" /><path fill="#ddd" stroke="#555" d="M21.500 1.500v4.500H26" />
                    <path fill="#e9e9e9" stroke="#777" d="M4 12.500h4v5h18v-5h4l2.500 4v12H1.500v-12z" /><path fill="#777" d="M6 13h22v7H6z" /><path fill="#3c3c3c" d="M6 24h22v3H6z" /><path fill="#fafafa" stroke="#666" d="M9.500 26.500h15l1.500 6H8z" />
                  </svg>
                  <svg v-else-if="a.id === 'window'" width="36" height="34" viewBox="0 0 36 34">
                    <defs><radialGradient id="sun"><stop offset="0" stop-color="#fffbd0" /><stop offset=".4" stop-color="#f5e92a" /><stop offset="1" stop-color="#f5e92a" stop-opacity="0" /></radialGradient><linearGradient id="win" x2="0" y2="1"><stop offset="0" stop-color="#fff" /><stop offset="1" stop-color="#dedede" /></linearGradient></defs>
                    <rect x="1" y="3" width="33.500" height="30.500" rx="1.500" fill="url(#win)" stroke="#c4c4c4" /><rect x="3" y="4.500" width="29.500" height="5" fill="#6585bb" /><circle cx="29" cy="7" r="7" fill="url(#sun)" />
                  </svg>
                  <svg v-else-if="a.id === 'floppy'" width="34" height="34" viewBox="0 0 34 34">
                    <path fill="#252c37" d="M1 1h32v32H3l-2-2z" /><path fill="#4a525f" d="M1 1h1.500v30H1zM31.500 1H33v30h-1.500z" /><path fill="#d3dfef" d="M5.500 1.500h23v16h-23z" /><path fill="#f4f7fb" d="M5.500 1.500h23v6l-23 6z" /><path fill="#9b9d9b" d="M8 22h17v10H8z" /><path fill="#1b1f24" d="M10.500 23.500H15v7.500h-4.500z" /><path fill="#cfcfcc" d="M18 22h5v10h-5z" /><path fill="#14181e" d="M3 32h29v1H3z" />
                  </svg>
                  <svg v-else-if="a.id === 'send'" width="34" height="34" viewBox="0 0 34 34">
                    <path fill="#dcdfe1" stroke="#8f9396" stroke-width=".8" d="M1.500 1.500 28 4.500 29.500 26 3 21.500z" /><path fill="#f7f8f8" stroke="#6f7375" stroke-width=".8" d="M2 2l12 12L28 5z" /><path fill="none" stroke="#aaa" stroke-width=".8" d="M3 21l8-9.500M29 25.500 18 12" /><path fill="#4ce43c" stroke="#2f9e28" d="M17 17q4 2 8 1l-.5-3.500L33 21l-5.500 8.500-1-3.500q-7 0-9.500-9z" />
                  </svg>
                  <svg v-else-if="a.id === 'save'" width="34" height="34" viewBox="0 0 34 34">
                    <path fill="#2d4340" d="M3 3h28v29H3z" /><path fill="#c96a1c" d="M4 29.500h26V32H4z" /><path fill="#e0e4e6" d="M11 4h13v8H11z" /><path fill="#1c2a29" d="M20 5h3v6h-3z" /><path fill="#f4f4f6" d="M6 15h22v14H6z" /><path stroke="#bcc" d="M8 19h18M8 22.500h18M8 26h18" /><path stroke="#5b4a1c" stroke-width="3.400" d="M12.500 24 31 3" /><path stroke="#e5ba3c" stroke-width="1.900" d="M13 23.500 30 4" /><path fill="#222" d="M10 27l1.500-4.500 2.500 2zM29 1.500l4 2-2 3-4-3z" />
                  </svg>
                  <svg v-else width="34" height="34" viewBox="0 0 34 34">
                    <ellipse cx="17" cy="31.500" rx="15" ry="1.100" fill="#aaa" /><path fill="#7dce1f" d="M2 10.500 15 1v5.500c10 .5 16 6 16 13 0 6-5 10.500-14 11.500 6-3 8.500-6 7.500-9.500-.8-3-4-4.500-9.500-4.500v4z" /><path fill="#63b512" d="M24.500 20.500c1 4.500-2 8-7.500 10.500 9-1 14-5.500 14-12-1.500-2-3 2.500-6.500 1.500z" />
                  </svg>
                  <span>{{ a.label }}</span>
                </a>
              </div>
            </div>

            <div class="content">
              <div class="panel">
                <div class="tabbar">
                  <a v-for="(t, i) in tabs" :key="t" class="tab" :class="{ on: i === tabs.length - 1 }">{{ t }}</a>
                </div>
                <div class="addline">
                  <svg width="12" height="12" viewBox="0 0 1792 1792"><path fill="#222" :d="plusPath" /></svg><span>Adicionar Pauta</span>
                </div>
                <div class="grid">
                  <div class="tr th"><div class="c0">Título</div><div>Descrição</div><div>Ordem</div><div>Ação</div></div>
                  <div v-for="r in rows" :key="r.ordem" class="tr" :class="{ tall: r.more }">
                    <div>{{ r.titulo }}</div>
                    <div class="desc"><p>{{ r.descricao }} <svg v-if="r.more" class="eye" width="13" height="13" viewBox="0 0 1792 1792"><path :d="eyePath" /></svg></p></div>
                    <div>{{ r.ordem }}</div>
                    <div class="ops">
                      <svg width="22" height="22" viewBox="0 0 1792 1792"><path :d="pencilPath" /></svg>
                      <svg width="18" height="20" viewBox="0 0 18 20"><path d="M.5 3.300h17v2H.5z" /><path fill="none" stroke="#000" stroke-width="1.500" d="M5.500 3.500 6.500 1h5l1 2.500" /><path fill-rule="evenodd" d="M2 5h14v12.500q0 2-2 2H4q-2 0-2-2zM4.600 7v10.500h1.500V7zM8.200 7v10.500h1.500V7zM11.900 7v10.500h1.500V7z" /></svg>
                    </div>
                  </div>
                </div>
              </div>
            </div>

            <div class="status">localhost/sindifisconacional/eventosindicato/editar/23#ta...</div>
            <div class="foot"></div>
            <div class="ticket"><span>Ticket</span></div>
            <div class="toast">
              <div class="toast-in">
                <svg width="16" height="16" viewBox="0 0 16 16"><circle v-for="(s, i) in spinner" :key="i" :cx="s.cx" :cy="s.cy" r="2" :fill="s.fill" /></svg>
                <span>carregando...</span>
              </div>
            </div>
          </div>
          <div class="scroll">
            <svg width="8" height="5" viewBox="0 0 8 5"><path fill="#a3a3a3" d="M4 0l4 4.500H0z" /></svg>
            <div class="thumb"></div>
            <svg class="down" width="8" height="5" viewBox="0 0 8 5"><path fill="#505050" d="M0 0h8L4 4.500z" /></svg>
          </div>
        </div>
      </section>
    </div>
  </div>
</template>

<style>
html, body { margin: 0; overflow: hidden; }
</style>

<style scoped>
* { box-sizing: border-box; }
svg { display: block; flex: none; }
.sprite { position: absolute; }
.desktop { width: 1360px; height: 768px; display: flex; flex-direction: column; font-family: "Liberation Sans", Arial, sans-serif; overflow: hidden; position: relative; }
.topbar { height: 27px; flex: none; background: linear-gradient(#57544b, #403e39); display: flex; align-items: center; color: #dfdbd2; font: 700 13.500px "Noto Sans", sans-serif; padding-left: 12px; position: relative; white-space: nowrap; }
.act { width: 96px; letter-spacing: .55px; }
.appname { margin-left: 6px; width: 110px; letter-spacing: .6px; }
.tri { margin-left: 6px; }
.clock { position: absolute; left: 671px; top: 4px; letter-spacing: .3px; }
.tray { position: absolute; left: 1203px; top: 0; height: 27px; display: flex; align-items: center; }
.net { margin-left: 30px; }
.vol { margin-left: 12px; }
.pow { margin-left: 12px; }
.tri2 { margin-left: 11px; }

.main { flex: 1; display: flex; min-height: 0; }
.dock { width: 47px; flex: none; background: #33312d; display: flex; flex-direction: column; position: relative; }
.launcher { width: 42px; height: 42px; margin: 1px 2px; border-radius: 4px; display: flex; align-items: center; justify-content: center; position: relative; }
.focused { background: #5a5855; }
.low { margin-top: 2px; }
.pip { position: absolute; left: 0; top: 19px; width: 4px; height: 4px; border-radius: 50%; background: #e95420; }
.apps { margin: auto 0 13px 14px; }

.browser { flex: 1; min-width: 0; display: flex; flex-direction: column; background: #fff; }
.tabstrip { height: 34px; flex: none; background: #dee1e6; display: flex; align-items: center; padding-left: 8px; font: 14.500px "Noto Sans", sans-serif; color: #3c4043; }
.btab { width: 224px; height: 34px; padding: 0 11px 0 12px; display: flex; align-items: center; position: relative; flex: none; }
.btab::after { content: ""; position: absolute; right: -1px; top: 7px; width: 1px; height: 20px; background: #80848a; }
.btab.nosep::after, .btab.active::after { display: none; }
.btab.active { background: #fff; border-radius: 8px 8px 0 0; }
.btitle { margin-left: 8px; flex: 1; min-width: 0; white-space: nowrap; }
.clip { -webkit-mask-image: linear-gradient(to left, transparent, #000 26px); mask-image: linear-gradient(to left, transparent, #000 26px); margin-right: 9px; }
.t1 { letter-spacing: -.45px; }
.t3 { letter-spacing: -.1px; }
.t4 { letter-spacing: -.1px; }
.aud { margin-right: 17px; }
.plus { margin-left: 16px; }
.wincontrols { margin-left: auto; display: flex; gap: 23px; padding-right: 13px; }

.toolbar { height: 38px; flex: none; display: flex; align-items: center; padding-left: 14px; border-bottom: 1px solid #d9d9d9; padding-bottom: 2px; }
.tbi { margin-right: 16px; }
.omnibox { width: 969px; height: 28px; margin-left: -2px; border-radius: 14px; background: #f1f3f4; display: flex; align-items: center; padding: 0 10px; font: 14px "Noto Sans", sans-serif; color: #5f6368; }
.url { margin-left: 8px; letter-spacing: -.2px; white-space: nowrap; }
.url b { font-weight: 400; color: #202124; }
.star { margin-left: auto; }
.exts { margin-left: 8px; width: 124px; height: 28px; border: 1px solid #dadce0; border-radius: 14px; display: flex; align-items: center; gap: 14px; padding-left: 4px; }
.music { margin-left: 10px; }
.avatar { margin-left: 14px; }
.kebab { margin-left: 20px; }

.viewport { flex: 1; min-height: 0; display: flex; }
.page { width: 1298px; background: #f3f3f3; position: relative; overflow: hidden; }
.sitehead { height: 45px; display: flex; align-items: flex-start; background: linear-gradient(#fff, #ededed); border-bottom: 1px solid #d8d8d8; padding-left: 22px; }
.logo { margin-top: 7px; }
.search { margin: 5px 0 0 371px; width: 300px; height: 34px; border: 1px solid #ccc; background: #fff; padding: 0 12px; font: 14px "Liberation Sans", Arial, sans-serif; color: #555; border-radius: 0; outline: 0; }
.search::placeholder { color: #757575; }
.shortcuts { margin-left: 135px; display: flex; height: 44px; }
.cell { width: 43px; border-left: 1px solid #ccc; display: flex; align-items: center; justify-content: center; padding: 1px 1px 0 0; }
.cell:first-child { border-left-color: transparent; }
.menu { background: #1b5e20; height: 80px; padding: 0 0 0 20px; display: flex; flex-wrap: wrap; align-content: flex-start; color: #fff; font-size: 14px; }
.mitem { height: 40px; display: flex; align-items: center; white-space: nowrap; }
.mico { margin-right: 5px; }
.chev { margin-left: 5px; }
.titlebar { margin: 16px 19px 0; height: 70px; background: linear-gradient(#fcfcfc, #ededed); display: flex; justify-content: space-between; padding: 0 6px 0 20.500px; box-shadow: 0 3px 4px -1px #e2e2e2; }
h1 { margin: 16px 0 0; font-size: 32px; line-height: 37px; font-style: italic; color: #8c8c8c; }
.actions { display: flex; padding-top: 6px; font-size: 12px; color: #000; white-space: nowrap; }
.action { display: flex; flex-direction: column; align-items: center; gap: 5px; }
.content { margin: 10px 19px 0; height: 403px; background: #fff; padding: 10px; }
.panel { height: 383px; border: 1px solid #a6a6a6; font-size: 12px; color: #222; }
.tabbar { height: 30px; background: #ccc; display: flex; align-items: flex-end; gap: 2.400px; padding-left: .5px; font-weight: 700; color: #000; }
.tab { padding: 0 13px; height: 29px; line-height: 28px; white-space: nowrap; }
.tab.on { background: #fff; }
.addline { height: 50px; padding: 5px 37.800px 0 0; display: flex; justify-content: flex-end; align-items: center; gap: 1px; }
.grid { margin-left: 38px; width: 1163px; border-bottom: 1px solid #ddd; color: #000; }
.tr { display: grid; grid-template-columns: 291px 523px 116px 233px; height: 43px; border-top: 1px solid #ddd; }
.tr > div { border-left: 1px solid #ddd; padding: 0 10px 2px; display: flex; align-items: center; }
.tr > .desc { padding-bottom: 1px; }
.tr > div:last-child { border-right: 1px solid #ddd; }
.tr.tall { height: 47px; }
.tr p { margin: 0; line-height: 13px; }
.tr.th { height: 40px; border-top: 0; background: #ccc; font-weight: 700; width: 1162px; grid-template-columns: 291px 523px 116px 232px; }
.tr.th > div:last-child { border-right: 0; }
.tr.th > .c0 { justify-content: center; border-left-color: #ccc; padding-right: 26px; }
.eye { display: inline-block; vertical-align: -3px; margin-top: -3px; }
.tr > .ops { justify-content: center; gap: 15px; padding: 0 2px 1px 0; }
.status { position: absolute; left: 6px; bottom: 3px; font: 14px "Noto Sans", sans-serif; letter-spacing: .5px; color: #efefef; }
.foot { position: absolute; left: 0; right: 0; bottom: 0; height: 5px; background: #e8e8e8; border-top: 1px solid #d2d2d2; }
.ticket { position: absolute; left: 0; top: 163px; width: 28px; height: 72px; border-radius: 0 6px 6px 0; background: #0f6a00; border-right: 2px solid #8dbb86; box-shadow: 0 0 4px #ccc; display: flex; align-items: center; justify-content: center; }
.ticket span { transform: rotate(-90deg); color: #fff; font-size: 14px; font-weight: 700; }
.toast { position: absolute; left: 1118px; top: 565px; width: 141px; height: 56px; border: 1px solid #7db82f; border-radius: 6px; background: #95cb3e; padding: 3px; }
.toast-in { height: 48px; border: 1px solid #7db82f; border-radius: 4px; background: #fafafa; display: flex; align-items: center; padding-left: 10px; gap: 14.200px; font-size: 12px; color: #333; }
.scroll { width: 15px; background: #f1f1f1; display: flex; flex-direction: column; align-items: center; padding: 6px 0; }
.thumb { width: 11px; height: 612px; margin-top: 4px; background: #c1c1c1; }
.down { margin-top: auto; }
</style>
